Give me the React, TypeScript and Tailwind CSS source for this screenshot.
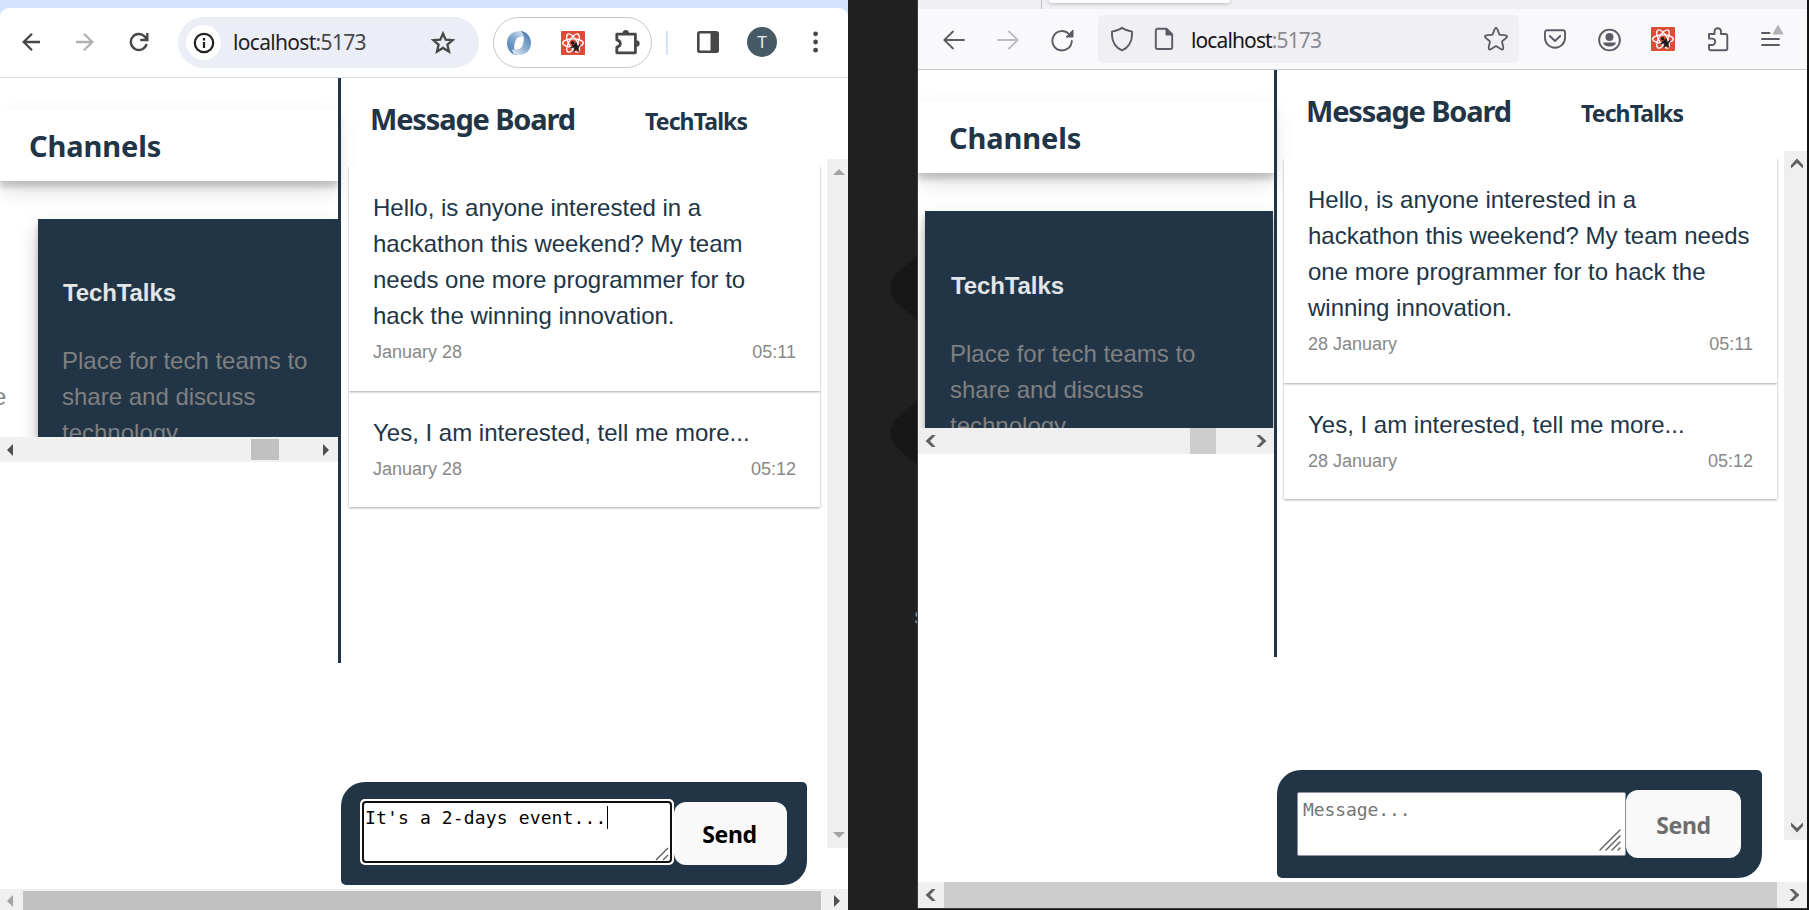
import React from "react";

const UI = "font-['Noto_Sans','Open_Sans',sans-serif]";

type Kind = "chrome" | "firefox";
type Dir = "up" | "down" | "left" | "right";

const rotation: Record<Dir, number> = { up: 0, right: 90, down: 180, left: 270 };

function Arrow({ kind, dir, color }: { kind: Kind; dir: Dir; color: string }) {
  return (
    <svg width="12" height="12" viewBox="0 0 12 12" className="shrink-0">
      <g transform={`rotate(${rotation[dir]} 6 6)`}>
        {kind === "chrome" ? (
          <path d="M6 3 L12 9 H0 Z" fill={color} />
        ) : (
          <path d="M0 8 L6 1.6 L12 8 V11.6 L6 6 L0 11.6 Z" fill={color} />
        )}
      </g>
    </svg>
  );
}

function DebuggerIcon() {
  return (
    <svg width="24" height="24" viewBox="0 0 24 24" className="shrink-0">
      <rect width="24" height="24" rx="1" fill="#dd4b39" />
      <g fill="none" stroke="#fff" strokeWidth="1.3">
        <ellipse cx="12" cy="12" rx="10.3" ry="4.2" />
        <ellipse cx="12" cy="12" rx="10.3" ry="4.2" transform="rotate(60 12 12)" />
        <ellipse cx="12" cy="12" rx="10.3" ry="4.2" transform="rotate(120 12 12)" />
      </g>
      <g stroke="#1c1c1c" strokeWidth="1.6" fill="none">
        <circle cx="11.6" cy="11.8" r="1.8" fill="#1c1c1c" stroke="none" />
        <path d="M12.8 13.4 L16.2 18.4" strokeWidth="4.2" />
        <path d="M9.5 17.2 L12.5 15.2 M12.5 20.6 L14.5 18 M15 11.6 L15.600 14.500 M19 13.400 L16.500 16.500 M17.500 20.600 L16.500 18" />
      </g>
    </svg>
  );
}

function SwirlIcon() {
  return (
    <svg width="26" height="26" viewBox="0 0 26 26" className="shrink-0">
      <defs>
        <linearGradient id="swirlDark" x1="1" y1="0" x2="0.2" y2="1">
          <stop offset="0" stopColor="#3a6ea8" />
          <stop offset="0.6" stopColor="#8fb1d2" />
          <stop offset="1" stopColor="#dce8f2" />
        </linearGradient>
        <linearGradient id="swirlLight" x1="0" y1="1" x2="0.8" y2="0">
          <stop offset="0" stopColor="#3f73ac" />
          <stop offset="0.6" stopColor="#86aacd" />
          <stop offset="1" stopColor="#dce8f2" />
        </linearGradient>
      </defs>
      <path d="M18 2 C9 -1 1 4 1 13 C1 20 6 25 11.500 25 C7.500 21 7.600 16 9.200 12 C10.800 8 14 5.500 20.500 6.500 Z" fill="url(#swirlLight)" />
      <path d="M8 24 C17 27 25 22 25 13 C25 6 20 1 14.500 1 C18.500 5 18.400 10 16.800 14 C15.200 18 12 20.500 5.500 19.500 Z" fill="url(#swirlDark)" />
      <ellipse cx="13" cy="13" rx="3.900" ry="5.800" fill="#fff" transform="rotate(10 13 13)" />
    </svg>
  );
}

function ChromeBar() {
  return (
    <div className="h-[78px] shrink-0 bg-[#d3e3fd] pt-2">
      <div className="flex h-[70px] items-center rounded-t-[9px] border-b border-[#dcdcdc] bg-white">
        <svg width="20" height="20" viewBox="0 0 20 20" className="-mt-px ml-[21px] shrink-0" fill="none" stroke="#474747" strokeWidth="2.3">
          <path d="M19 10 H2.5 M11 1.7 L2.7 10 L11 18.3" />
        </svg>
        <svg width="20" height="20" viewBox="0 0 20 20" className="-mt-px ml-[34px] shrink-0" fill="none" stroke="#b0b0b0" strokeWidth="2.3">
          <path d="M1 10 H17.5 M9 1.7 L17.3 10 L9 18.3" />
        </svg>
        <svg width="20" height="20" viewBox="0 0 20 20" className="-mt-px ml-[34px] shrink-0" fill="none" stroke="#474747" strokeWidth="2.4">
          <path d="M17.6 12 A8 8 0 1 1 15.6 4.4 L18 7.2 M18.3 1 V8 H11.3" />
        </svg>
        <div className="ml-[29px] flex h-[51px] w-[301px] items-center rounded-full bg-[#ebeef7] pl-2">
          <div className="flex h-[35px] w-[35px] items-center justify-center rounded-full bg-white">
            <svg width="22" height="22" viewBox="0 0 22 22" fill="none" stroke="#1f1f1f" strokeWidth="2.2">
              <circle cx="11" cy="11" r="9.2" />
              <path d="M11 10 V16 M11 6 V8.4" />
            </svg>
          </div>
          <span className={`${UI} ml-3 text-[21px] tracking-[-0.68px] text-[#1f1f1f]`}>
            localhost<span className="text-[#474747]">:5173</span>
          </span>
          <svg width="26" height="26" viewBox="0 0 26 26" className="mr-[23px] ml-auto" fill="none" stroke="#474747" strokeWidth="2.3" strokeLinejoin="miter">
            <path d="M13 3.500 L15.700 9.600 L22.600 10.200 L17.400 14.700 L19 21.500 L13 17.900 L7 21.500 L8.600 14.700 L3.400 10.200 L10.300 9.600 Z" />
          </svg>
        </div>
        <div className="ml-[14px] flex h-[51px] w-[159px] items-center rounded-full border border-[#c7c7c7] pl-[12px]">
          <SwirlIcon />
          <span className="ml-[29px] flex"><DebuggerIcon /></span>
          <svg width="27" height="27" viewBox="0 0 27 27" className="-mt-px ml-[28px] shrink-0">
            <path d="M3.8 5.2 H22.4 V23.8 H3.8 V18.2 C8.500 17 8.500 12 3.8 10.8 Z" fill="none" stroke="#474747" strokeWidth="2.8" strokeLinejoin="round" />
            <path d="M9.500 4.5 A3.2 3.4 0 0 1 16.100 4.5Z M23.200 11.3 A3.4 3.2 0 0 1 23.200 17.8Z" fill="#474747" />
          </svg>
        </div>
        <div className="ml-[14px] h-[24px] w-[2px] bg-[#d3e3fd]" />
        <svg width="22" height="22" viewBox="0 0 22 22" className="-mt-px ml-[29px] shrink-0">
          <rect x="1.3" y="1.3" width="19.4" height="19.4" rx="1.5" fill="none" stroke="#474747" strokeWidth="2.6" />
          <path d="M13.5 1 H21 V21 H13.5Z" fill="#474747" />
        </svg>
        <div className="-mt-px ml-[28px] flex h-[30px] w-[30px] items-center justify-center rounded-full bg-[#455a64] font-['Roboto',sans-serif] text-[17px] leading-none text-[#e8eef0]">
          T
        </div>
        <svg width="6" height="22" viewBox="0 0 6 22" className="-mt-px ml-[36px] shrink-0" fill="#474747">
          <circle cx="2.600" cy="2.8" r="2.4" />
          <circle cx="2.600" cy="11" r="2.4" />
          <circle cx="2.600" cy="19.2" r="2.4" />
        </svg>
      </div>
    </div>
  );
}

function FirefoxBar() {
  return (
    <div className="flex h-[70px] shrink-0 flex-col border-b border-[#c9c9cd] bg-[#f9f9fb]">
      <div className="flex h-[9px] shrink-0 items-start overflow-hidden bg-[#f0eff4]">
        <div className="h-[9px] w-[124px] border-r border-[#bdbdc4]" />
        <div className="ml-[7px] h-[3px] w-[181px] rounded-b-[5px] bg-white shadow-[0_0_4px_rgba(0,0,0,0.4)]" />
      </div>
      <div className="flex flex-1 items-center">
        <svg width="22" height="22" viewBox="0 0 22 22" className="mt-[2px] ml-[25px] shrink-0" fill="none" stroke="#5b5b66" strokeWidth="1.8" strokeLinecap="round" strokeLinejoin="round">
          <path d="M21 11 H1.5 M10 2.5 L1.3 11 L10 19.5" />
        </svg>
        <svg width="22" height="22" viewBox="0 0 22 22" className="mt-[2px] ml-[32px] shrink-0" fill="none" stroke="#bcbcc1" strokeWidth="1.8" strokeLinecap="round" strokeLinejoin="round">
          <path d="M1 11 H20.5 M12 2.5 L20.7 11 L12 19.5" />
        </svg>
        <svg width="23" height="23" viewBox="0 0 23 23" className="mt-[3px] ml-[32px] shrink-0">
          <path d="M20.8 12 A9.7 9.7 0 1 1 18 4.9" fill="none" stroke="#5b5b66" strokeWidth="1.9" strokeLinecap="round" />
          <path d="M22 1 V8 H15 Z" fill="#5b5b66" stroke="#5b5b66" strokeLinejoin="round" />
        </svg>
        <div className="ml-[24px] flex h-[48px] w-[421px] items-center rounded-[5px] bg-[#f0f0f4]">
          <svg width="24" height="26" viewBox="0 0 24 26" className="ml-3 shrink-0" fill="none" stroke="#5b5b66" strokeWidth="1.9" strokeLinejoin="round">
            <path d="M12 1.8 C14 3.5 18 4.8 22 5.6 V9 C22 16 18 22 12 24.3 C6 22 2 16 2 9 V5.6 C6 4.8 10 3.5 12 1.8Z" />
          </svg>
          <svg width="20" height="24" viewBox="0 0 20 24" className="ml-[20px] shrink-0">
            <path d="M3.5 1.8 H12.5 L18.2 7.5 V20.2 A1.8 1.8 0 0 1 16.4 22 H3.6 A1.8 1.8 0 0 1 1.8 20.2 V3.5 A1.7 1.7 0 0 1 3.5 1.8Z" fill="none" stroke="#5b5b66" strokeWidth="1.9" />
            <path d="M12 1.5 L18.5 8 H12Z" fill="#5b5b66" stroke="#5b5b66" />
          </svg>
          <span className={`${UI} mt-[3px] ml-[17px] text-[21px] tracking-[-0.88px] text-[#15141a]`}>
            localhost<span className="text-[#8c8b92]">:5173</span>
          </span>
          <svg width="26" height="26" viewBox="0 0 26 26" className="mr-[10px] ml-auto" fill="none" stroke="#5b5b66" strokeWidth="1.8" strokeLinejoin="round">
            <path d="M13 2 C13.6 2 14 2.4 14.3 3.2 L16.5 8.6 L22.6 9.3 C24.4 9.6 24.6 10.5 23.4 11.7 L19 15.4 L20.3 21.5 C20.5 23.4 19.6 23.9 18.2 23.2 L13 20 L7.8 23.2 C6.4 23.9 5.5 23.4 5.7 21.5 L7 15.4 L2.6 11.7 C1.4 10.5 1.6 9.6 3.4 9.3 L9.5 8.6 L11.7 3.2 C12 2.4 12.4 2 13 2Z" />
          </svg>
        </div>
        <svg width="22" height="20" viewBox="0 0 22 20" className="ml-[25px] shrink-0" fill="none" stroke="#5b5b66" strokeWidth="1.9" strokeLinecap="round" strokeLinejoin="round">
          <path d="M3 1.3 H19 A2 2 0 0 1 21 3.3 V9 A10 9.7 0 0 1 1 9 V3.3 A2 2 0 0 1 3 1.3Z M5.8 7 L11 12 L16.2 7" />
        </svg>
        <svg width="24" height="24" viewBox="0 0 24 24" className="mt-px ml-[31px] shrink-0">
          <circle cx="12.5" cy="12" r="10.4" fill="none" stroke="#5b5b66" strokeWidth="1.9" />
          <circle cx="12.5" cy="9" r="4" fill="#5b5b66" />
          <path d="M6 14.5 H19 C18.5 17 16 18.6 12.5 18.6 C9 18.6 6.5 17 6 14.5Z" fill="#5b5b66" />
        </svg>
        <span className="ml-[30px] flex"><DebuggerIcon /></span>
        <svg width="22" height="26" viewBox="0 0 22 26" className="ml-[32px] shrink-0" fill="none" stroke="#5b5b66" strokeWidth="1.9" strokeLinejoin="round">
          <path d="M2 8 H7.5 V5 A3.3 3.3 0 0 1 14 5 V8 H18.5 A1.8 1.8 0 0 1 20.3 9.8 V22.5 A1.8 1.8 0 0 1 18.5 24.2 H3.8 A1.8 1.8 0 0 1 2 22.5 V19 H5 A3.2 3.2 0 0 0 5 12.6 H2 Z" />
        </svg>
        <svg width="24" height="26" viewBox="0 0 24 26" className="-mt-[9px] ml-[32px] shrink-0">
          <path d="M1 11 H8.5 M1 17 H18 M1 23 H18" stroke="#5b5b66" strokeWidth="1.9" strokeLinecap="round" />
          <path d="M17 3.5 L22 12 H12Z" fill="#b1b1b3" stroke="#b1b1b3" strokeLinejoin="round" />
        </svg>
      </div>
    </div>
  );
}

function Message({ text, date, time, last }: { text: string; date: string; time: string; last?: boolean }) {
  return (
    <div
      className={`bg-white px-6 text-[#213547] shadow-[0_1px_3px_rgba(0,0,0,0.12),0_1px_2px_rgba(0,0,0,0.24)] [clip-path:inset(0_-5px_-5px_-5px)] ${
        last ? "pt-6 pb-5" : "relative z-10 pt-6 pb-[21px]"
      }`}
    >
      <p className="text-[24px] leading-[36px]">{text}</p>
      <div className="flex justify-between text-[18px] leading-[36px] text-[#888888]">
        <span>{date}</span>
        <span>{time}</span>
      </div>
    </div>
  );
}

function ChannelCard({ kind }: { kind: Kind }) {
  return (
    <div
      className={`h-[300px] flex-1 bg-[#213547] shadow-[0_10px_20px_rgba(0,0,0,0.19),0_6px_6px_rgba(0,0,0,0.23)] ${
        kind === "chrome" ? "pt-14 pl-6" : "pt-[57px] pl-[25px]"
      }`}
    >
      <h3 className="pl-px text-[24px] leading-[36px] font-bold tracking-[-0.1px] text-[#e3e6e8]">TechTalks</h3>
      <p className="mt-8 w-[270px] text-[24px] leading-[36px] text-[#808080]">
        Place for tech teams to share and discuss technology
      </p>
    </div>
  );
}

function Grip({ kind }: { kind: Kind }) {
  return kind === "chrome" ? (
    <svg width="14" height="14" viewBox="0 0 14 14" className="absolute right-px bottom-0" stroke="#555" strokeWidth="1.2">
      <path d="M1 13 L13 1 M8 13 L13 8" />
    </svg>
  ) : (
    <svg width="24" height="24" viewBox="0 0 24 24" className="absolute right-[3px] bottom-[3px]" stroke="#666" strokeWidth="1.5" strokeLinecap="round">
      <path d="M2 22 L22 2 M8 22 L22 8 M14 22 L22 14 M20 22 L22 20" />
    </svg>
  );
}

function Composer({ kind }: { kind: Kind }) {
  const chrome = kind === "chrome";
  return (
    <div
      className={`flex shrink-0 items-center rounded-[24px_5px_24px_5px] bg-[#213547] ${
        chrome ? "h-[103px] w-[466px] pl-[19px]" : "h-[108px] w-[485px] pl-[20px]"
      }`}
    >
      {chrome ? (
        <div className="-mt-[3px] h-[66px] w-[314px] shrink-0 rounded-[5px] bg-white p-[2px]">
          <div className="relative h-[62px] rounded-[4px] border-2 border-[#101010] bg-white pt-[3px] pl-px">
            <div className="flex items-start font-['DejaVu_Sans_Mono',monospace] text-[18px] leading-[24px] tracking-[0.14px] text-black">
              It's a 2-days event...
              <span className="h-[23px] w-px bg-black" />
            </div>
            <Grip kind={kind} />
          </div>
        </div>
      ) : (
        <div className="relative h-[64px] w-[329px] shrink-0 rounded-[2px] border border-[#8f8f9d] bg-white pt-[5px] pl-[5px] font-['DejaVu_Sans_Mono',monospace] text-[18px] leading-[24px] tracking-[-0.1px] text-[#757575]">
          Message...
          <Grip kind={kind} />
        </div>
      )}
      <div
        className={`${UI} flex items-center justify-center rounded-[12px] bg-[#f9f9f9] pt-[2px] text-[23px] font-bold tracking-[-0.4px] ${
          chrome ? "h-[63px] w-[113px] pr-[2px] text-black" : "h-[68px] w-[115px] text-[#6d6d6d]"
        }`}
      >
        Send
      </div>
    </div>
  );
}

function Page({ kind }: { kind: Kind }) {
  const chrome = kind === "chrome";
  const dates = chrome ? "January 28" : "28 January";
  return (
    <div className="flex min-h-0 flex-1 overflow-hidden bg-white font-['Liberation_Sans',Arial,sans-serif]">
      <div className={`flex shrink-0 flex-col pt-[31px] ${chrome ? "w-[338px]" : "w-[356px]"}`}>
        <h2
          className={`${UI} h-[72px] shrink-0 bg-white text-[29px] leading-[74px] font-bold tracking-[-0.1px] text-[#213547] shadow-[0_10px_20px_rgba(0,0,0,0.12),0_6px_6px_rgba(0,0,0,0.18)] ${
            chrome ? "pl-[29px]" : "pl-[31px]"
          }`}
        >
          Channels
        </h2>
        <div className={`flex shrink-0 overflow-hidden pt-[38px] ${chrome ? "h-[256px]" : "h-[255px] pr-px"}`}>
          <div
            className={`h-[300px] shrink-0 overflow-hidden pt-[160px] text-[24px] leading-[36px] text-[#888] ${
              chrome ? "w-[38px]" : "w-[7px]"
            }`}
          >
            {chrome && <span className="-ml-[7px]">e</span>}
          </div>
          <ChannelCard kind={kind} />
        </div>
        <div
          className={`flex shrink-0 items-center ${
            chrome ? "h-[25px] bg-[#f0f0f0] pr-[6px] pl-[4px]" : "h-[26px] bg-[#efefef] px-[6px]"
          }`}
        >
          <Arrow kind={kind} dir="left" color={chrome ? "#505050" : "#606060"} />
          <div className={chrome ? "ml-[235px] h-[21px] w-[28px] bg-[#c1c1c1]" : "ml-[254px] h-[26px] w-[26px] bg-[#cdcdcd]"} />
          <span className="ml-auto flex">
            <Arrow kind={kind} dir="right" color={chrome ? "#505050" : "#606060"} />
          </span>
        </div>
      </div>
      <div className={`w-[3px] shrink-0 bg-[#213547] ${chrome ? "h-[585px]" : "h-[587px]"}`} />
      <div className="flex flex-1 flex-col">
        <div className={`${UI} flex h-[88px] shrink-0 items-baseline pt-[21px] pl-[29px] font-bold text-[#213547]`}>
          <h2 className="w-[275px] text-[29px] leading-[40px] tracking-[-1.15px]">Message Board</h2>
          <span className="text-[23px] leading-[40px] tracking-[-0.88px]">TechTalks</span>
        </div>
        <div className={`mr-[7px] flex shrink-0 flex-col ${chrome ? "ml-[8px]" : "ml-[7px]"}`}>
          <Message
            text="Hello, is anyone interested in a hackathon this weekend? My team needs one more programmer for to hack the winning innovation."
            date={dates}
            time="05:11"
          />
          <Message text="Yes, I am interested, tell me more..." date={dates} time="05:12" last />
        </div>
        <div className="mt-auto mb-1">
          <Composer kind={kind} />
        </div>
      </div>
      <div
        className={`mt-[81px] flex h-[689px] shrink-0 flex-col items-center justify-between ${
          chrome ? "w-[21px] bg-[#f0f0f0] py-[7px] pl-[3px]" : "w-[23px] bg-[#efefef] py-[6px] pl-[3px]"
        }`}
      >
        <Arrow kind={kind} dir="up" color={chrome ? "#a3a3a3" : "#606060"} />
        <Arrow kind={kind} dir="down" color={chrome ? "#a3a3a3" : "#606060"} />
      </div>
    </div>
  );
}

function Desktop() {
  return (
    <div className="relative w-[69px] shrink-0 overflow-hidden bg-[#202020]">
      <svg width="69" height="910" viewBox="0 0 69 910" className="absolute inset-0" fill="#171717">
        <path d="M69 256 L48 274 Q37 288 48 302 L69 320Z" />
        <path d="M69 401 L48 419 Q37 433 48 447 L69 465Z" />
      </svg>
      <span className="absolute top-[606px] left-[66px] font-['Liberation_Sans',sans-serif] text-[18px] leading-[24px] text-[#8a8a8a]">S</span>
    </div>
  );
}

export default function App() {
  return (
    <div className="flex h-[910px] w-[1809px] overflow-hidden bg-[#131313]">
      <div className="flex w-[848px] shrink-0 flex-col bg-white">
        <ChromeBar />
        <Page kind="chrome" />
        <div className="flex h-[21px] shrink-0 items-center bg-[#f0f0f0] pt-[2px] pr-[5px] pl-[4px]">
          <Arrow kind="chrome" dir="left" color="#a3a3a3" />
          <div className="ml-[7px] h-[19px] w-[798px] bg-[#c1c1c1]" />
          <span className="ml-auto flex">
            <Arrow kind="chrome" dir="right" color="#505050" />
          </span>
        </div>
      </div>
      <Desktop />
      <div className="flex h-[909px] w-[890px] shrink-0 flex-col border-b border-l border-[#3c3c3c] bg-white">
        <FirefoxBar />
        <Page kind="firefox" />
        <div className="flex h-[26px] shrink-0 items-center bg-[#efefef] px-[6px]">
          <Arrow kind="firefox" dir="left" color="#606060" />
          <div className="ml-[8px] h-[26px] w-[833px] bg-[#cdcdcd]" />
          <span className="ml-auto flex">
            <Arrow kind="firefox" dir="right" color="#606060" />
          </span>
        </div>
      </div>
    </div>
  );
}
